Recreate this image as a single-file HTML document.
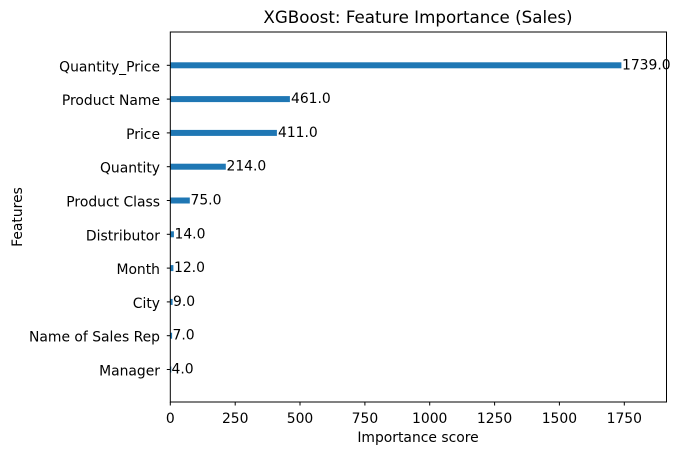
<!DOCTYPE html>
<html><head><meta charset="utf-8"><style>
html,body{margin:0;padding:0;background:#fff;}
svg{display:block;}
text{font-family:"DejaVu Sans","Liberation Sans",sans-serif;fill:#000;}
</style></head><body>
<svg width="679" height="455" viewBox="0 0 679 455" xmlns="http://www.w3.org/2000/svg">
<rect width="679" height="455" fill="#fff"/>
<text x="418" y="23" font-size="16.7" text-anchor="middle">XGBoost: Feature Importance (Sales)</text>
<g fill="#1f77b4">
<rect x="170.3" y="62.3" width="451.1" height="6"/>
<rect x="170.3" y="96.1" width="119.6" height="6"/>
<rect x="170.3" y="129.9" width="106.6" height="6"/>
<rect x="170.3" y="163.7" width="55.5" height="6"/>
<rect x="170.3" y="197.5" width="19.5" height="6"/>
<rect x="170.3" y="231.3" width="3.6" height="6"/>
<rect x="170.3" y="265.1" width="3.1" height="6"/>
<rect x="170.3" y="298.9" width="2.3" height="6"/>
<rect x="170.3" y="332.7" width="1.8" height="6"/>
<rect x="170.3" y="366.5" width="1" height="6"/>
</g>
<g font-size="13.9" dominant-baseline="central">
<text x="622" y="65.3">1739.0</text>
<text x="291" y="99.1">461.0</text>
<text x="278" y="132.9">411.0</text>
<text x="226.5" y="166.7">214.0</text>
<text x="190.5" y="200.5">75.0</text>
<text x="174.5" y="234.3">14.0</text>
<text x="174" y="268.1">12.0</text>
<text x="173" y="301.9">9.0</text>
<text x="172.5" y="335.7">7.0</text>
<text x="171.5" y="369.5">4.0</text>
</g>
<g font-size="13.9" text-anchor="end" dominant-baseline="central">
<text x="160" y="67.3">Quantity_Price</text>
<text x="160" y="101.1">Product Name</text>
<text x="160" y="134.9">Price</text>
<text x="160" y="168.7">Quantity</text>
<text x="160" y="202.5">Product Class</text>
<text x="160" y="236.3">Distributor</text>
<text x="160" y="270.1">Month</text>
<text x="160" y="303.9">City</text>
<text x="160" y="337.7">Name of Sales Rep</text>
<text x="160" y="371.5">Manager</text>
</g>
<g stroke="#000" stroke-width="1">
<line x1="166.8" x2="170.3" y1="65.3" y2="65.3"/>
<line x1="166.8" x2="170.3" y1="99.1" y2="99.1"/>
<line x1="166.8" x2="170.3" y1="132.9" y2="132.9"/>
<line x1="166.8" x2="170.3" y1="166.7" y2="166.7"/>
<line x1="166.8" x2="170.3" y1="200.5" y2="200.5"/>
<line x1="166.8" x2="170.3" y1="234.3" y2="234.3"/>
<line x1="166.8" x2="170.3" y1="268.1" y2="268.1"/>
<line x1="166.8" x2="170.3" y1="301.9" y2="301.9"/>
<line x1="166.8" x2="170.3" y1="335.7" y2="335.7"/>
<line x1="166.8" x2="170.3" y1="369.5" y2="369.5"/>
<line x1="170.3" x2="170.3" y1="402" y2="405.5"/>
<line x1="235.2" x2="235.2" y1="402" y2="405.5"/>
<line x1="300.0" x2="300.0" y1="402" y2="405.5"/>
<line x1="364.9" x2="364.9" y1="402" y2="405.5"/>
<line x1="429.7" x2="429.7" y1="402" y2="405.5"/>
<line x1="494.6" x2="494.6" y1="402" y2="405.5"/>
<line x1="559.4" x2="559.4" y1="402" y2="405.5"/>
<line x1="624.3" x2="624.3" y1="402" y2="405.5"/>
</g>
<rect x="170.3" y="32" width="496.2" height="370" fill="none" stroke="#000" stroke-width="1"/>
<g font-size="13.9" text-anchor="middle">
<text x="170.3" y="423">0</text>
<text x="235.2" y="423">250</text>
<text x="300.0" y="423">500</text>
<text x="364.9" y="423">750</text>
<text x="429.7" y="423">1000</text>
<text x="494.6" y="423">1250</text>
<text x="559.4" y="423">1500</text>
<text x="624.3" y="423">1750</text>
<text x="418" y="442">Importance score</text>
<text x="0" y="0" transform="translate(22,217) rotate(-90)">Features</text>
</g>
</svg>
</body></html>
